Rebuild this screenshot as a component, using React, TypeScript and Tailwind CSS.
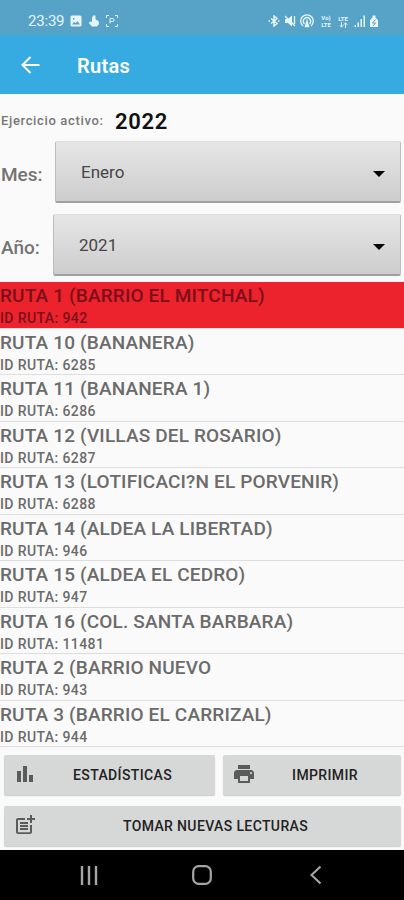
import type { ReactNode } from "react";
import { MdBarChart, MdOutlinePostAdd, MdPrint } from "react-icons/md";

type Route = { name: string; id: number };

const ROUTES: Route[] = [
  { name: "RUTA 1 (BARRIO EL MITCHAL)", id: 942 },
  { name: "RUTA 10 (BANANERA)", id: 6285 },
  { name: "RUTA 11 (BANANERA 1)", id: 6286 },
  { name: "RUTA 12 (VILLAS DEL ROSARIO)", id: 6287 },
  { name: "RUTA 13 (LOTIFICACI?N EL PORVENIR)", id: 6288 },
  { name: "RUTA 14 (ALDEA LA LIBERTAD)", id: 946 },
  { name: "RUTA 15 (ALDEA EL CEDRO)", id: 947 },
  { name: "RUTA 16 (COL. SANTA BARBARA)", id: 11481 },
  { name: "RUTA 2 (BARRIO NUEVO", id: 943 },
  { name: "RUTA 3 (BARRIO EL CARRIZAL)", id: 944 },
];

function StatusBar() {
  return (
    <div className="flex h-[35px] shrink-0 items-center bg-[#56a3c7] pt-[7px] pr-[25px] pl-7 text-[#e8f5fb]">
      <span className="w-[42px] text-[15px] leading-none tracking-[-0.2px]">23:39</span>
      <svg className="h-3 w-3" viewBox="0 0 12 12">
        <path fill="currentColor" fillRule="evenodd" d="M2 .5h8A1.500 1.500 0 0 1 11.500 2v8a1.500 1.500 0 0 1-1.500 1.500H2A1.500 1.500 0 0 1 .5 10V2A1.500 1.500 0 0 1 2 .5ZM2 9.500h8L7.500 6 5.500 8.200 4 6.800ZM3 3v1.500h1.500V3Z" />
      </svg>
      <svg className="ml-1.5 h-3 w-3" viewBox="0 0 12 12">
        <path fill="currentColor" d="M5 .5h2.500v4L10.500 6l.5 3-2 2.500H4L.8 8 2 6.500l2 .5V3Z" />
      </svg>
      <svg className="ml-1.5 h-3 w-3" viewBox="0 0 12 12" fill="none" stroke="currentColor">
        <path d="M.5 3V.5H3M9 .5h2.500V3M.5 9v2.500H3M9 11.500h2.500V9M4 8.500v-5h2.500a1.500 1.500 0 0 1 0 3H4" />
      </svg>
      <div className="ml-auto flex items-center gap-1">
        <svg className="h-3 w-3" viewBox="0 0 12 12" fill="none" stroke="currentColor" strokeWidth="1.500">
          <path d="m3 3.500 6 5L6 11V1l3 2.500-6 5M.5 6h1.500M10 6h1.500" />
        </svg>
        <svg className="h-3 w-3" viewBox="0 0 12 12">
          <path fill="currentColor" d="M1 4h3l4-3.500v11L4 8H1Z" />
          <path stroke="currentColor" strokeWidth="1.300" d="m1 1 10 10M10.500 1v8" />
        </svg>
        <svg className="h-3.5 w-3.5" viewBox="0 0 14 14" fill="none" stroke="currentColor" strokeWidth="1.400">
          <path d="M3 12a6.300 6.300 0 1 1 8 0M4.500 10a3.700 3.700 0 1 1 5 0" />
          <path fill="currentColor" d="M5.500 12.500 7 7l1.500 5.500Z" />
        </svg>
        <div className="ml-0.5 w-3 text-center text-[6px] leading-[7px] font-bold">
          <div>Vo)</div>
          <div>LTE</div>
        </div>
        <div className="flex w-3.5 flex-col items-center text-[6px] leading-[7px] font-bold">
          <div>LTE</div>
          <svg className="h-[6px] w-[9px]" viewBox="0 0 9 6" fill="none" stroke="currentColor">
            <path d="M2.500 0v5M.8 3.300l1.700 1.900 1.700-1.900M6.500 6V1M4.800 2.700 6.500.8l1.700 1.900" />
          </svg>
        </div>
        <svg className="h-3 w-3" viewBox="0 0 12 12" fill="currentColor">
          <path d="M.5 10h1.500v2H.5ZM3.500 7.500H5V12H3.500ZM6.500 4H8v8H6.500ZM9.500.5H11V12H9.500Z" />
        </svg>
        <svg className="-ml-px h-3 w-2.5" viewBox="0 0 10 12">
          <path fill="currentColor" d="M3.500.5h3v2L9 5v7H1V5l2.500-2.500Z" />
          <path fill="none" stroke="#56a3c7" d="m6.500 4.500-3 3.500h3L4 11" />
        </svg>
      </div>
    </div>
  );
}

function Select({ value, className }: { value: string; className: string }) {
  return (
    <button
      type="button"
      className={`flex h-[62px] items-center justify-between rounded-[2px] border border-t-[#dedede] border-r-[#bdbdbd] border-b-2 border-b-[#a0a0a0] border-l-[#bcbcbc] bg-linear-to-b from-[#e6e6e6] to-[#cdcdcd] pr-[15px] text-[17px] text-[#464646] ${className}`}
    >
      <span className="pt-[2px]">{value}</span>
      <svg className="mt-1 h-1.5 w-3" viewBox="0 0 12 6">
        <path d="M0 0h12L6 6Z" fill="#050505" />
      </svg>
    </button>
  );
}

function ActionButton({ icon, label, className }: { icon: ReactNode; label: string; className: string }) {
  return (
    <button
      type="button"
      className={`flex h-10 items-center rounded-[2px] bg-[#d6d8d7] pr-[7px] pl-[9px] text-[14px] font-medium text-[#222] shadow-[0_1px_1px_#c9cac9] ${className}`}
    >
      <span className="mb-[3px] w-6 shrink-0 text-2xl text-[#5b5b5b]">{icon}</span>
      <span className="flex-1 text-center tracking-[0.37px]">{label}</span>
    </button>
  );
}

export default function App() {
  return (
    <div className="flex h-[900px] w-[404px] flex-col overflow-hidden bg-[#fafafa] font-['Roboto',sans-serif]">
      <StatusBar />
      <header className="flex h-[59px] shrink-0 items-center bg-[#35abe2] pl-[21px] text-white">
        <svg className="h-[18px] w-[19px]" viewBox="0 0 19 18" fill="none" stroke="currentColor" strokeWidth="2">
          <path d="M18.500 9H2M9.500 1 1.500 9l8 8" />
        </svg>
        <h1 className="ml-[37px] pt-[2px] text-[20px] font-semibold tracking-[0.3px]">Rutas</h1>
      </header>

      <div className="flex h-[47px] shrink-0 items-center pt-[7px]">
        <span className="w-[115px] pl-px text-[13px] font-medium tracking-[0.65px] text-[#777]">Ejercicio activo:</span>
        <span className="text-[22px] font-semibold tracking-[0.7px] text-[#111]">2022</span>
      </div>
      <div className="flex h-[73px] shrink-0">
        <span className="w-[55px] pt-[20px] pl-px text-[19px] font-medium text-[#737373]">Mes:</span>
        <Select value="Enero" className="w-[346px] pl-[25px]" />
      </div>
      <div className="flex h-[68px] shrink-0">
        <span className="w-[53px] pt-[20px] pl-px text-[19px] font-medium text-[#737373]">Año:</span>
        <Select value="2021" className="w-[348px] pl-[25px]" />
      </div>

      <ul className="shrink-0">
        {ROUTES.map((route, i) => (
          <li
            key={route.id}
            className={`h-[46.5px] border-b pt-[2px] font-medium ${
              i === 0 ? "border-[#e0e0e0] bg-[#ec222d] text-[#7b101a]" : "border-[#dedede] text-[#6b6b6b]"
            }`}
          >
            <div className="text-[19px] leading-[23px] tracking-[0.16px] whitespace-nowrap">{route.name}</div>
            <div className="pt-px text-[14px] leading-[20px] tracking-[0.4px]">ID RUTA: {route.id}</div>
          </li>
        ))}
      </ul>

      <div className="grid shrink-0 gap-[11px] px-1 pt-[8px]">
        <div className="flex gap-2">
          <ActionButton icon={<MdBarChart />} label="ESTADÍSTICAS" className="w-[211px]" />
          <ActionButton icon={<MdPrint />} label="IMPRIMIR" className="w-[178px]" />
        </div>
        <ActionButton icon={<MdOutlinePostAdd />} label="TOMAR NUEVAS LECTURAS" className="w-[397px]" />
      </div>

      <nav className="mt-auto flex h-[50px] shrink-0 items-center bg-black">
        <svg className="ml-[80px] h-[19px] w-[18px]" viewBox="0 0 18 19" stroke="#a5a5a5" strokeWidth="2.400">
          <path d="M2 0v19M9 0v19M16 0v19" />
        </svg>
        <svg className="ml-[94px] h-5 w-5" viewBox="0 0 20 20" fill="none" stroke="#a5a5a5" strokeWidth="2.200">
          <rect x="1.200" y="1.200" width="17.600" height="17.600" rx="5.500" />
        </svg>
        <svg className="ml-[98px] h-5 w-3" viewBox="0 0 12 20" fill="none" stroke="#a5a5a5" strokeWidth="2.200">
          <path d="M10.500 1.500 1.500 10l9 8.500" />
        </svg>
      </nav>
    </div>
  );
}
